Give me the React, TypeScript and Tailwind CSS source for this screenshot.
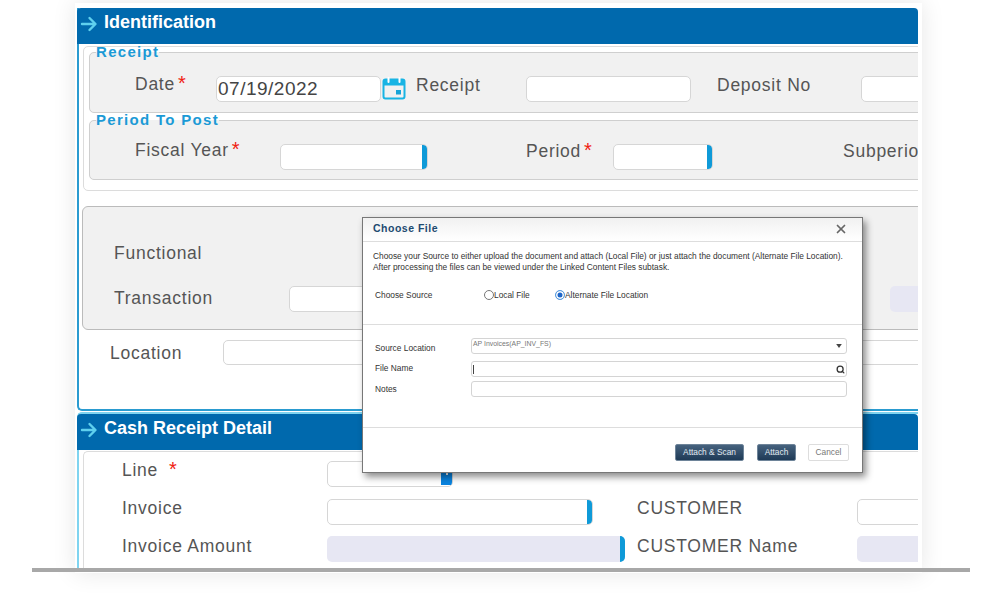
import React from "react";
import { Search, X } from "lucide-react";

function Arrow() {
  return (
    <svg width="18" height="16" viewBox="0 0 18 16" className="shrink-0" fill="none" stroke="#5fd0ee" strokeWidth="2.4" strokeLinecap="round" strokeLinejoin="round">
      <path d="M2 8h13M9.5 2l6 6-6 6" />
    </svg>
  );
}

function Calendar() {
  return (
    <svg width="24" height="24" viewBox="0 0 24 24" className="ml-[1px] shrink-0" fill="none">
      <rect x="1.5" y="3.5" width="21" height="19" rx="2" stroke="#18b4e4" strokeWidth="2" />
      <path d="M1.5 5.5a2 2 0 0 1 2-2h17a2 2 0 0 1 2 2v4h-21z" fill="#18b4e4" />
      <rect x="5.5" y="1" width="2" height="6" rx="1" fill="#fff" />
      <rect x="16.5" y="1" width="2" height="6" rx="1" fill="#fff" />
      <rect x="14" y="14" width="5" height="4.5" fill="#18a4d8" />
    </svg>
  );
}

function Star() {
  return <span className="text-[#f02010] text-[20px] leading-[20px] ml-[3px] relative -top-[1px]">*</span>;
}

function Bar() {
  return <span className="h-full w-[5px] rounded-r-[3px] bg-[#0f9ad8]" />;
}

function Section({ title }: { title: string }) {
  return (
    <div className="h-[36px] shrink-0 -ml-[2px] bg-[#0069ad] rounded-t-[4px] flex items-center pl-[3px] pb-[4px] gap-[6px]">
      <Arrow />
      <span className="text-white font-bold text-[18px] leading-[24px] -mt-[4px]">{title}</span>
    </div>
  );
}

export default function App() {
  const label = "shrink-0 text-[#555] text-[17.5px] leading-[20px] tracking-[0.75px] whitespace-nowrap";
  const input = "shrink-0 h-[26px] bg-white border border-[#d6d6d6] rounded-[5px] flex justify-end overflow-hidden";
  const disabled = "shrink-0 h-[26px] bg-[#e7e7f3] rounded-[5px] flex justify-end overflow-hidden";
  const legend = "ml-[6px] text-[#1b9ad6] font-bold text-[15px] leading-[14px] tracking-[1.3px] whitespace-nowrap";
  const dlgLabel = "w-[96px] shrink-0 text-[#333] text-[8.35px] leading-[16px]";
  const dlgInput = "w-[376px] h-[16px] border border-[#d4d4d4] rounded-[3px] bg-white flex items-center";

  return (
    <div className="relative w-[1004px] h-[611px] bg-white overflow-hidden pt-[3px] font-['Liberation_Sans',Arial,sans-serif]">
      <div className="ml-[75px] w-[847px] h-[570px] bg-white pt-[5px] px-[2px] shadow-[0_0_22px_rgba(0,0,0,0.10)]">
        <div className="w-[841px] h-[560px] overflow-hidden">
          {/* Identification */}
          <div className="h-[403px] border-l-2 border-b-2 border-[#2a9bd0] rounded-bl-[5px]">
            <Section title="Identification" />
            <div className="mt-[2px] ml-[4px] w-[900px] h-[145px] border border-[#dcdcdc] rounded-[5px] pl-[5px]">
              <fieldset className="-mt-[2px] h-[68px] border border-[#cfcfcf] rounded-[5px] bg-[#f1f1f1]">
                <legend className={legend}>Receipt</legend>
                <div className="flex items-start pt-[17px] w-max">
                  <div className={`w-[126px] pl-[45px] -mt-[2px] flex ${label}`}>Date<Star /></div>
                  <div className={`${input} w-[165px] items-center justify-start!`}>
                    <span className="text-[#444] text-[19px] tracking-[0.5px] pl-[1px]">07/19/2022</span>
                  </div>
                  <Calendar />
                  <div className={`${label} ml-[10px] w-[110px] -mt-[1px]`}>Receipt</div>
                  <div className={`${input} w-[165px]`} />
                  <div className={`${label} ml-[26px] w-[144px] -mt-[1px]`}>Deposit No</div>
                  <div className={`${input} w-[100px]`} />
                </div>
              </fieldset>
              <fieldset className="h-[67px] border border-[#cfcfcf] rounded-[5px] bg-[#f1f1f1]">
                <legend className={legend}>Period To Post</legend>
                <div className="flex items-start pt-[17px] w-max">
                  <div className={`w-[190px] pl-[45px] -mt-[4px] flex ${label}`}>Fiscal Year<Star /></div>
                  <div className={`${input} w-[148px]`}><Bar /></div>
                  <div className={`w-[185px] pl-[98px] -mt-[3px] flex ${label}`}>Period<Star /></div>
                  <div className={`${input} w-[100px]`}><Bar /></div>
                  <div className={`${label} ml-[130px] -mt-[3px]`}>Subperio</div>
                </div>
              </fieldset>
            </div>

            <div className="mt-[15px] ml-[3px] w-[900px] h-[124px] border border-[#bbb] rounded-[6px] bg-[#f1f1f1] pl-[31px] pt-[36px]">
              <div className={label}>Functional</div>
              <div className="flex items-start mt-[23px]">
                <div className={`${label} w-[175px] mt-[2px]`}>Transaction</div>
                <div className={`${input} w-[200px]`} />
                <div className="w-[401px] shrink-0" />
                <div className={`${disabled} w-[40px]`} />
              </div>
            </div>

            <div className="flex items-start mt-[10px] ml-[31px]">
              <div className={`${label} w-[113px] mt-[3px]`}>Location</div>
              <div className={`${input} w-[720px] h-[25px]!`} />
            </div>
          </div>

          {/* Cash Receipt Detail */}
          <div className="mt-[1px] h-[160px] border-t-2 border-l-2 border-[#7fd4f0] rounded-tl-[5px]">
            <Section title="Cash Receipt Detail" />
            <div className="mt-[1px] ml-[4px] w-[900px] h-[140px] border-l border-t border-[#dcdcdc] rounded-tl-[5px] pl-[38px] pt-[9px]">
              <div className="flex items-start">
                <div className={`${label} w-[205px] flex -mt-[1px]`}>Line<span className="w-[8px]" /><Star /></div>
                <div className={`${input} w-[126px] items-end`}>
                  <span className="w-[11px] h-[14px] mb-[1px] bg-[#0a84e0] flex justify-center">
                    <span className="w-[2px] h-[4px] bg-white" />
                  </span>
                </div>
              </div>
              <div className="flex items-start mt-[12px]">
                <div className={`${label} w-[205px] -mt-[1px]`}>Invoice</div>
                <div className={`${input} w-[266px]`}><Bar /></div>
                <div className={`${label} ml-[44px] w-[220px] -mt-[1px]`}>CUSTOMER</div>
                <div className={`${input} w-[100px]`} />
              </div>
              <div className="flex items-start mt-[11px]">
                <div className={`${label} w-[205px]`}>Invoice Amount</div>
                <div className={`${disabled} w-[298px]`}><Bar /></div>
                <div className={`${label} ml-[12px] w-[220px]`}>CUSTOMER Name</div>
                <div className={`${disabled} w-[100px]`} />
              </div>
            </div>
          </div>
        </div>
      </div>

      {/* baseline rule */}
      <div className="absolute left-[32px] top-[568px] w-[938px] h-[4px] bg-[#a8a8a8]" />

      {/* Choose File dialog */}
      <div className="absolute left-[362px] top-[217px] w-[501px] h-[256px] bg-white border border-[#777] shadow-[3px_4px_7px_rgba(0,0,0,0.45)]">
        <div className="h-[24px] flex items-center justify-between pl-[10px] pr-[15px] pb-[2px] border-b border-[#ddd] bg-gradient-to-b from-[#f1f1f1] to-white">
          <span className="text-[#1d4a70] font-bold text-[10.5px] tracking-[0.5px]">Choose File</span>
          <X size={14} strokeWidth={3} color="#666" className="-mr-px" />
        </div>
        <div className="h-[83px] border-b border-[#ddd] px-[10px] pt-[9px]">
          <p className="text-[#333] text-[8.35px] leading-[11px] whitespace-nowrap">
            Choose your Source to either upload the document and attach (Local File) or just attach the document (Alternate File Location).
            <br />
            After processing the files can be viewed under the Linked Content Files subtask.
          </p>
          <div className="flex items-center mt-[16px] pl-[2px] text-[#333] text-[8.35px] leading-[12px]">
            <span className="w-[109px]">Choose Source</span>
            <span className="w-[10px] h-[10px] rounded-full border border-[#777] bg-white" />
            <span className="w-[61px]">Local File</span>
            <span className="w-[10px] h-[10px] rounded-full border border-[#5a9fe0] bg-[#1e66c8] shadow-[inset_0_0_0_1.5px_#fff]" />
            <span>Alternate File Location</span>
          </div>
        </div>
        <div className="h-[103px] border-b border-[#ddd] pl-[12px] pt-[13px]">
          <div className="flex items-start">
            <span className={`${dlgLabel} mt-[2px]`}>Source Location</span>
            <div className={`${dlgInput} justify-between pl-[1px] pr-[4px]`}>
              <span className="text-[#777] text-[6.9px] leading-[10px] -mt-[4px]">AP Invoices(AP_INV_FS)</span>
              <svg width="6" height="4" viewBox="0 0 7 5"><path d="M0 0h7L3.5 5z" fill="#444" /></svg>
            </div>
          </div>
          <div className="flex items-start mt-[5px]">
            <span className={`${dlgLabel} -mt-px`}>File Name</span>
            <div className={`${dlgInput} justify-between pl-[1px] pr-[1px]`}>
              <span className="w-px h-[9px] bg-[#444]" />
              <Search size={9} strokeWidth={3.4} color="#333" />
            </div>
          </div>
          <div className="flex items-start mt-[4px]">
            <span className={dlgLabel}>Notes</span>
            <div className={dlgInput} />
          </div>
        </div>
        <div className="flex justify-end pt-[16px] pr-[13px]">
          <span className="h-[17px] w-[69px] flex items-center justify-center rounded-[2px] border border-[#6e8499] bg-gradient-to-b from-[#46627e] to-[#1f3b57] text-[#e3ebf2] text-[8.35px]">Attach &amp; Scan</span>
          <span className="ml-[13px] h-[17px] w-[39px] flex items-center justify-center rounded-[2px] border border-[#6e8499] bg-gradient-to-b from-[#46627e] to-[#1f3b57] text-[#e3ebf2] text-[8.35px]">Attach</span>
          <span className="ml-[12px] h-[17px] w-[41px] flex items-center justify-center rounded-[2px] border border-[#ddd] bg-white text-[#777] text-[8.35px]">Cancel</span>
        </div>
      </div>
    </div>
  );
}
